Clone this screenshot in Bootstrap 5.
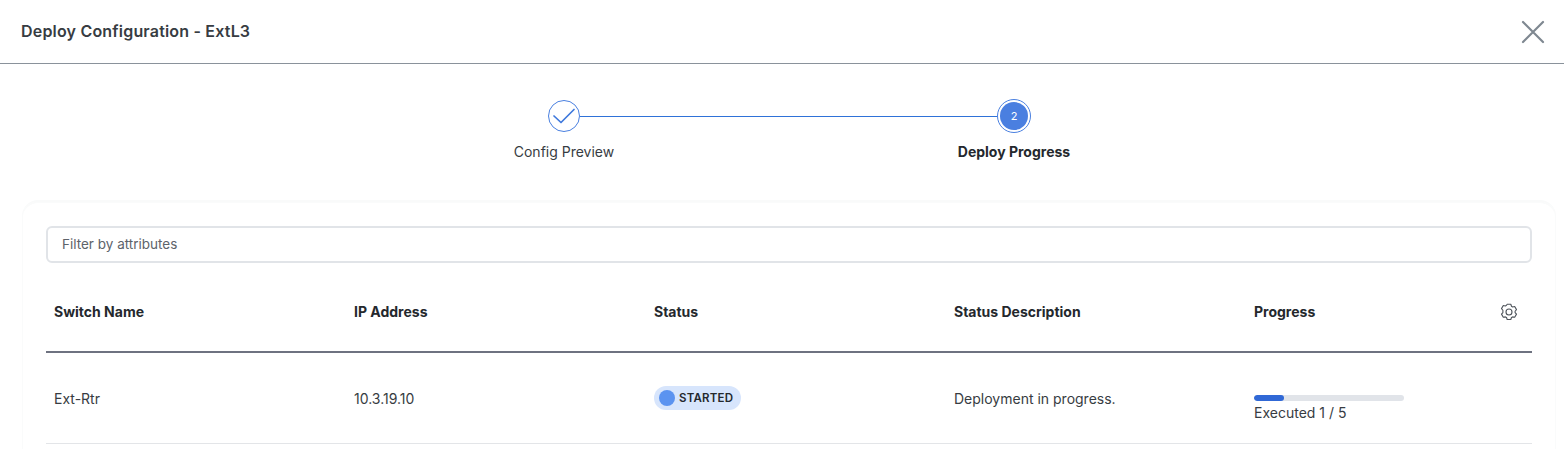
<!DOCTYPE html>
<html lang="en">
<head>
<meta charset="utf-8">
<title>Deploy Configuration</title>
<link href="https://cdn.jsdelivr.net/npm/bootstrap@5.3.0/dist/css/bootstrap.min.css" rel="stylesheet">
<style>
html, body { height: 449px; overflow: hidden; }
body { background: #fff; font-family: Inter, "Liberation Sans", sans-serif; font-size: 14px; color: #373c42; }
.dlg-head { height: 64px; border-bottom: 1px solid #8a929b; padding: 0 19px 0 21px; }
.dlg-title { font-family: Inter, sans-serif; font-size: 16px; font-weight: 600; color: #373c42; margin: 0; letter-spacing: .19px; }
.dlg-close { line-height: 0; }
.stepper { width: 650px; margin-left: 464px; padding-top: 35px; height: 136px; }
.step-col { width: 200px; }
.step-dot { width: 34px; height: 34px; border-radius: 50%; border: 1px solid #4a80e0; background: #fff; position: relative; z-index: 1; }
.step-dot.done { width: 32px; height: 32px; margin: 1px 0; }
.step-dot.on::before { content: "2"; width: 28px; height: 28px; border-radius: 50%; background: #4a7fe0; color: #fff; font-size: 11px; display: flex; align-items: center; justify-content: center; }
.step-line { height: 1px; background: #2f72d8; width: 418px; position: absolute; left: 580px; top: 52px; }
.step-name { margin-top: 9px; line-height: 20px; }
.step-name.on { font-weight: 700; color: #24282d; }
.panel-box { margin: 0 8px 0 22px; border-radius: 16px 16px 0 0; border-top: 2px solid #f9fafa; padding: 24px 24px 0 24px; height: 249px; box-shadow: inset 1px 1px 0 #fafbfb, inset -1px 1px 0 #fafbfb; }
.flt-box { height: 37px; border: 2px solid #e1e4e8; border-radius: 6px; padding-left: 14px; padding-bottom: 7px; font-size: 13.5px; color: #5d636a; box-shadow: none; }
.flt-box::placeholder { color: #5d636a; opacity: 1; }
.dep-table { table-layout: fixed; margin: 0; width: 1486px; }
.dep-table th, .dep-table td { border: 0; padding: 0 8px; color: #24282d; background: transparent; box-shadow: none; }
.dep-table th { height: 89px; padding-top: 9px; font-size: 14px; font-weight: 700; vertical-align: middle; border-bottom: 2px solid #6e7280; }
.dep-table td { height: 91px; padding-top: 2px; border-bottom: 1px solid #e3e5e8; font-size: 14px; color: #373c42; vertical-align: middle; }
.dep-table td.prog-cell { padding-top: 22px; }
.col-w { width: 300px; }
.gear-ico { margin-right: 6px; }
.st-pill { height: 24px; background: #d7e5fc; border-radius: 12px; padding: 0 8px 0 5px; font-size: 11.5px; font-weight: 600; letter-spacing: .2px; color: #24282d; gap: 4px; }
.st-dot { width: 16px; height: 16px; border-radius: 50%; background: #5b93f0; }
.exec-bar { width: 150px; height: 6px; background: #e1e4e9; border-radius: 3px; }
.exec-bar .progress-bar { background: #3068d6; border-radius: 3px; }
.exec-txt { line-height: 18px; margin-top: 3px; }
</style>
</head>
<body>
<header class="dlg-head d-flex align-items-center justify-content-between">
  <h1 class="dlg-title">Deploy Configuration - ExtL3</h1>
  <span class="dlg-close">
    <svg width="24" height="24" viewBox="0 0 24 24" fill="none" stroke="#7f8891" stroke-width="2.2" stroke-linecap="round"><path d="M2 2 22 22M22 2 2 22"/></svg>
  </span>
</header>
<div class="position-relative">
  <div class="step-line"></div>
  <div class="stepper d-flex justify-content-between">
    <div class="step-col d-flex flex-column align-items-center">
      <div class="step-dot done d-flex align-items-center justify-content-center">
        <svg width="24" height="16" viewBox="0 0 24 16" fill="none" stroke="#3f78dc" stroke-width="1.7" stroke-linecap="round" stroke-linejoin="round"><path d="M2 8 9 14.5 22 1.5"/></svg>
      </div>
      <div class="step-name">Config Preview</div>
    </div>
    <div class="step-col d-flex flex-column align-items-center">
      <div class="step-dot on d-flex align-items-center justify-content-center"></div>
      <div class="step-name on">Deploy Progress</div>
    </div>
  </div>
</div>
<section class="panel-box">
  <input class="form-control flt-box" type="text" placeholder="Filter by attributes">
  <table class="table dep-table">
    <colgroup><col class="col-w"><col class="col-w"><col class="col-w"><col class="col-w"><col></colgroup>
    <thead>
      <tr>
        <th>Switch Name</th>
        <th>IP Address</th>
        <th>Status</th>
        <th>Status Description</th>
        <th>
          <div class="d-flex align-items-center justify-content-between">
            <span>Progress</span>
            <svg class="gear-ico" width="18" height="18" viewBox="0 0 18 18" fill="none" stroke="#4e545b" stroke-width="1.1" stroke-linejoin="round"><path d="M7.2 1.3h3.6l.7 2 1.1.65 2.1-.4 1.8 3.1-1.4 1.6v1.3l1.4 1.6-1.8 3.1-2.1-.4-1.1.65-.7 2h-3.6l-.7-2-1.1-.65-2.1.4-1.8-3.1 1.4-1.6V7.25l-1.4-1.6 1.8-3.1 2.1.4 1.1-.65z"/><circle cx="9" cy="9" r="3"/></svg>
          </div>
        </th>
      </tr>
    </thead>
    <tbody>
      <tr>
        <td>Ext-Rtr</td>
        <td>10.3.19.10</td>
        <td><span class="st-pill d-inline-flex align-items-center"><span class="st-dot"></span>STARTED</span></td>
        <td>Deployment in progress.</td>
        <td class="prog-cell">
          <div class="progress exec-bar"><div class="progress-bar" style="width:20%"></div></div>
          <div class="exec-txt">Executed 1 / 5</div>
        </td>
      </tr>
    </tbody>
  </table>
</section>
<script src="https://cdn.jsdelivr.net/npm/bootstrap@5.3.0/dist/js/bootstrap.bundle.min.js"></script>
</body>
</html>
